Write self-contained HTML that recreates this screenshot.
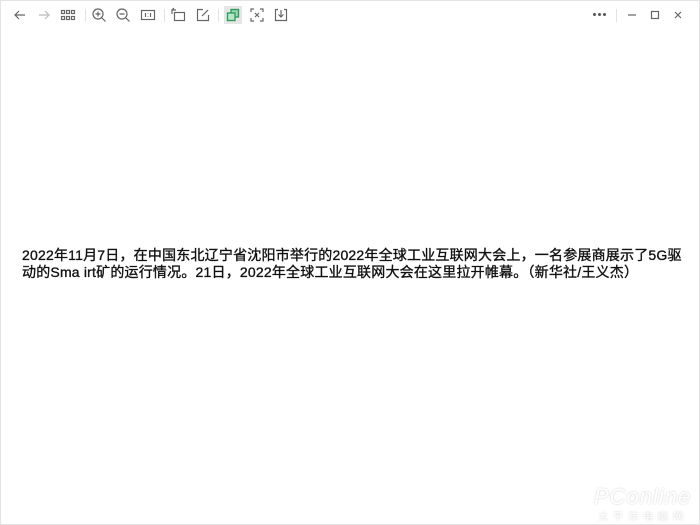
<!DOCTYPE html>
<html><head><meta charset="utf-8"><style>
html,body{margin:0;padding:0}
body{width:700px;height:525px;background:#fff;position:relative;overflow:hidden;font-family:"Liberation Sans","Noto Sans CJK SC",sans-serif;box-shadow:inset 0 0 0 1px #e4e4e4}
svg.i{position:absolute;top:7px;width:16px;height:16px;fill:none;stroke:#666;stroke-width:1.2}
.sep{position:absolute;top:9px;width:1px;height:13px;background:#e2e2e2}
.t{position:absolute;left:22px;font-size:14px;color:#111;white-space:nowrap;letter-spacing:0.2px;line-height:17px;-webkit-text-stroke:0.35px #111}
</style></head><body>
<svg class="i" style="left:12px" viewBox="0 0 16 16"><path d="M13 8H3M7 4L3 8l4 4"/></svg>
<svg class="i" style="left:36px;stroke:#bbb" viewBox="0 0 16 16"><path d="M3 8h10M9 4l4 4-4 4"/></svg>
<svg class="i" style="left:60px" viewBox="0 0 16 16"><rect x="1.5" y="3.5" width="3" height="3"/><rect x="6.5" y="3.5" width="3" height="3"/><rect x="11.5" y="3.5" width="3" height="3"/><rect x="1.5" y="9.5" width="3" height="3"/><rect x="6.5" y="9.5" width="3" height="3"/><rect x="11.5" y="9.5" width="3" height="3"/></svg>
<div class="sep" style="left:85px"></div>
<svg class="i" style="left:91px" viewBox="0 0 16 16"><circle cx="7" cy="7" r="5"/><path d="M11 11l3.5 3.5M4.5 7h5M7 4.5v5"/></svg>
<svg class="i" style="left:115px" viewBox="0 0 16 16"><circle cx="7" cy="7" r="5"/><path d="M11 11l3.5 3.5M4.5 7h5"/></svg>
<svg class="i" style="left:140px" viewBox="0 0 16 16"><rect x="1.5" y="3.5" width="13" height="9"/><path d="M5.5 6v4M10.5 6v4M8 6.5v.5M8 9v.5"/></svg>
<div class="sep" style="left:164px"></div>
<svg class="i" style="left:170px" viewBox="0 0 16 16"><rect x="4.5" y="5.5" width="10" height="8"/><path d="M2 7V3h4M4 1L2 3"/></svg>
<svg class="i" style="left:195px" viewBox="0 0 16 16"><path d="M13.5 8v5.5h-11v-11H8M7 9l6-6"/></svg>
<div class="sep" style="left:218px"></div>
<div style="position:absolute;left:224px;top:6px;width:18px;height:18px;background:#e6e6e6"></div>
<svg class="i" style="left:225px;stroke:#2a9a5a;stroke-width:1.3" viewBox="0 0 16 16"><rect x="6" y="2.5" width="7.5" height="7.5" fill="#9ad7b0"/><rect x="2.5" y="6" width="7.5" height="7.5" fill="#b8e6c8"/></svg>
<svg class="i" style="left:249px" viewBox="0 0 16 16"><path d="M2 5V2h3M11 2h3v3M14 11v3h-3M5 14H2v-3M6 6l4 4M10 6l-4 4"/></svg>
<svg class="i" style="left:273px" viewBox="0 0 16 16"><path d="M5 2.5H2.5v11h11v-11H11M8 3v7M5.5 7.5L8 10l2.5-2.5"/></svg>
<div style="position:absolute;left:593px;top:13px;font-size:0">
<span style="display:inline-block;width:3px;height:3px;background:#555;border-radius:50%;margin-right:2px"></span><span style="display:inline-block;width:3px;height:3px;background:#555;border-radius:50%;margin-right:2px"></span><span style="display:inline-block;width:3px;height:3px;background:#555;border-radius:50%"></span></div>
<div class="sep" style="left:616px"></div>
<svg class="i" style="left:624px" viewBox="0 0 16 16"><path d="M4 8h8"/></svg>
<svg class="i" style="left:647px" viewBox="0 0 16 16"><rect x="4.5" y="4.5" width="7" height="7"/></svg>
<svg class="i" style="left:670px" viewBox="0 0 16 16"><path d="M5 5l6 6M11 5l-6 6"/></svg>
<div class="t" style="top:247px">2022年11月7日，在中国东北辽宁省沈阳市举行的2022年全球工业互联网大会上，一名参展商展示了5G驱</div>
<div class="t" style="top:264px">动的Sma irt矿的运行情况。21日，2022年全球工业互联网大会在这里拉开帷幕。（新华社/王义杰）</div>
<div style="position:absolute;left:594px;top:484px;font-size:22px;color:#fff;text-shadow:0 0 2px #ccc;font-style:italic;letter-spacing:1px">PConline</div>
<div style="position:absolute;left:598px;top:508px;font-size:10px;color:#fff;text-shadow:0 0 2px #ccc;letter-spacing:5px">太平洋电脑网</div>
</body></html>
